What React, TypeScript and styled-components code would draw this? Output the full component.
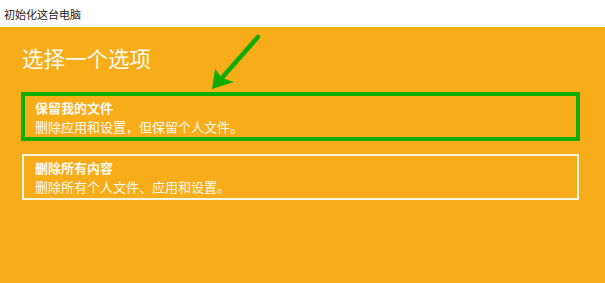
import styled, { createGlobalStyle } from 'styled-components';

const GlobalStyle = createGlobalStyle`
  html, body {
    margin: 0;
    padding: 0;
    background: #f7ac1a;
  }
  body {
    font-family: "Noto Sans CJK SC", "Noto Sans", sans-serif;
  }
`;

const Screen = styled.div`
  position: relative;
  width: 605px;
  height: 283px;
  overflow: hidden;
  background: #f7ac1a;
`;

const TitleBar = styled.div`
  height: 27px;
  display: flex;
  align-items: center;
  padding-left: 4px;
  background: #fff;
  color: #1b1b1b;
  font-size: 11px;
`;

const Content = styled.main`
  display: flex;
  flex-direction: column;
  padding: 17px 0 0 21px;
`;

const Heading = styled.h1`
  margin: 0 0 20px 1px;
  color: #fffaf0;
  font-size: 21.5px;
  font-weight: 400;
  line-height: 28px;
`;

const Options = styled.div`
  display: flex;
  flex-direction: column;
  gap: 13px;
`;

const Option = styled.button<{ $marked?: boolean }>`
  box-sizing: border-box;
  display: flex;
  flex-direction: column;
  align-items: flex-start;
  width: ${({ $marked }) => ($marked ? '559px' : '557px')};
  height: ${({ $marked }) => ($marked ? '49px' : '46px')};
  margin-left: ${({ $marked }) => ($marked ? '0' : '1px')};
  padding: ${({ $marked }) => ($marked ? '3px 10px' : '3px 11px')};
  border: ${({ $marked }) => ($marked ? '4px solid #10ad00' : '2px solid #fff6df')};
  background: transparent;
  color: #fffaf0;
  font-family: inherit;
  text-align: left;
  cursor: pointer;
`;

const OptionTitle = styled.span`
  font-size: 13px;
  font-weight: 700;
  line-height: 18px;
`;

const OptionText = styled.span`
  font-size: 13px;
  line-height: 19px;
`;

const Arrow = styled.svg`
  position: absolute;
  left: 200px;
  top: 25px;
`;

export default function App() {
  return (
    <>
      <GlobalStyle />
      <Screen>
        <TitleBar>初始化这台电脑</TitleBar>
        <Content>
          <Heading>选择一个选项</Heading>
          <Options>
            <Option $marked>
              <OptionTitle>保留我的文件</OptionTitle>
              <OptionText>删除应用和设置，但保留个人文件。</OptionText>
            </Option>
            <Option>
              <OptionTitle>删除所有内容</OptionTitle>
              <OptionText>删除所有个人文件、应用和设置。</OptionText>
            </Option>
          </Options>
        </Content>
        <Arrow width="70" height="70" viewBox="0 0 70 70">
          <line x1="58" y1="12" x2="20" y2="55" stroke="#10ad00" strokeWidth="4.5" strokeLinecap="round" />
          <polygon points="12,64 15,44 22,53 34,57" fill="#10ad00" />
        </Arrow>
      </Screen>
    </>
  );
}
